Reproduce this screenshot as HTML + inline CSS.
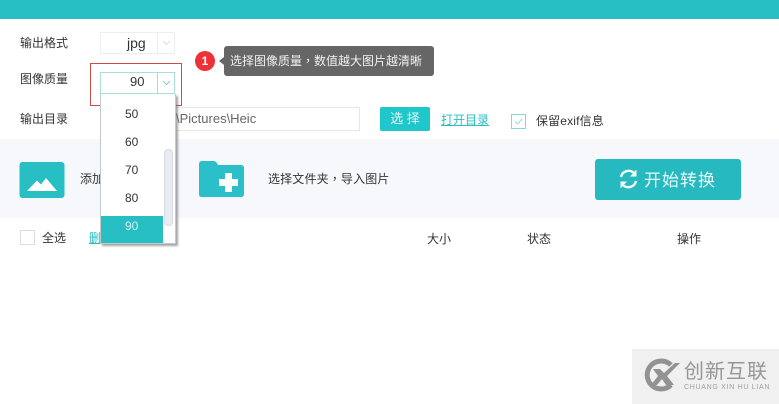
<!DOCTYPE html>
<html><head><meta charset="utf-8">
<style>
html,body{margin:0;padding:0;background:#fff}
#r{position:relative;width:779px;height:404px;overflow:hidden;background:#fff;font-family:"Liberation Sans","Noto Sans CJK SC",sans-serif;font-size:12px;color:#333}
#r div,#r svg{position:absolute}
.t{white-space:nowrap;line-height:16px}
.c{font-family:"Noto Sans CJK TC",sans-serif}
</style></head><body>
<div id="r">
<div style="left:0;top:0;width:779px;height:19px;background:#27bec4"></div>
<div style="left:0;top:139px;width:779px;height:79px;background:#f6f8fb"></div>

<div class="t" style="left:20px;top:35px">输出格式</div>
<div class="t" style="left:20px;top:71px">图像质量</div>
<div class="t" style="left:20px;top:111px">输出目录</div>

<div style="left:100px;top:32px;width:73px;height:20px;border:1px solid #eee"></div>
<div style="left:157px;top:33px;width:1px;height:20px;background:#eee"></div>
<div class="t" style="left:127px;top:35px;font-size:14px;color:#333">jpg</div>
<svg style="left:162px;top:40px" width="9" height="6"><path d="M1 1L4.500 4.500L8 1" fill="none" stroke="#ddd"/></svg>

<div style="left:100px;top:72px;width:73px;height:20px;border:1px solid #a6dfe2"></div>
<div style="left:157px;top:73px;width:1px;height:20px;background:#a6dfe2"></div>
<div class="t" style="left:130px;top:74px;font-size:13px;color:#333">90</div>
<svg style="left:162px;top:80px" width="9" height="6"><path d="M1 1L4.500 4.500L8 1" fill="none" stroke="#7fd2d6"/></svg>
<div style="left:90px;top:63px;width:90px;height:41px;border:1px solid #cf4b45"></div>

<div style="left:174px;top:107px;width:184px;height:22px;border:1px solid #e6e6e6"></div>
<div class="t" style="left:176px;top:111px;font-size:13px;color:#666">\Pictures\Heic</div>

<div style="left:380px;top:107px;width:50px;height:24px;background:#1fc6ca;border-radius:2px;color:#e8fbfb;text-align:center;line-height:24px;font-size:13px">选 择</div>
<div class="t" style="left:441px;top:112px;color:#27bec4;text-decoration:underline;font-size:12px">打开目录</div>
<div style="left:511px;top:114px;width:13px;height:13px;border:1px solid #7fd8dc"></div>
<svg style="left:511px;top:114px" width="15" height="15"><path d="M4 7.500L6.500 10L11 5" fill="none" stroke="#8fdcdf"/></svg>
<div class="t" style="left:536px;top:113px;letter-spacing:.15px">保留exif信息</div>

<div style="left:195px;top:51px;width:20px;height:20px;border-radius:50%;background:#ee3136;color:#fff;text-align:center;line-height:20px;font-size:12px;font-weight:bold">1</div>
<div style="left:219px;top:57px;width:0;height:0;border-top:4px solid transparent;border-bottom:4px solid transparent;border-right:5px solid #666"></div>
<div class="t" style="left:224px;top:46px;width:210px;height:30px;line-height:29px;background:#666;border-radius:3px;color:#f2f2f2;text-indent:6px">选择图像质量<span class="c">，</span>数值越大图片越清晰</div>

<svg style="left:19px;top:162px" width="46" height="37"><rect width="45" height="36" y="0" x="0.500" rx="3" fill="#27bec4"/><path d="M8 29L18 18.500L22 22.500L27 16L38 29Z" fill="#fff"/></svg>
<div class="t" style="left:80px;top:171px">添加图片</div>

<svg style="left:199px;top:161px" width="46" height="37"><path d="M3 0H15Q17 0 19 4H42Q45 4 45 7V33Q45 36 42 36H3Q0 36 0 33V3Q0 0 3 0Z" fill="#2bbfc9"/><rect x="26" y="12" width="7" height="19" fill="#fff"/><rect x="20" y="18" width="19" height="7" fill="#fff"/></svg>
<div class="t" style="left:268px;top:171px;letter-spacing:.15px">选择文件夹<span class="c">，</span>导入图片</div>

<div style="left:595px;top:159px;width:146px;height:41px;background:#27b9c0;border-radius:3px"></div>
<svg style="left:618px;top:168px" width="21" height="22" viewBox="0 0 21 22"><path d="M3 9A7.800 7.800 0 0 1 16.500 5.500M18 13A7.800 7.800 0 0 1 4.500 16.500" fill="none" stroke="#f3fbfb" stroke-width="2.400"/><path d="M18.500 1.500V8.500H12Z M2.500 20.500V13.500H9Z" fill="#f3fbfb"/></svg>
<div class="t" style="left:644px;top:170px;font-size:17px;line-height:21px;color:#eafafa;letter-spacing:1px">开始转换</div>

<div style="left:20px;top:230px;width:13px;height:13px;border:1px solid #ddd;background:#fff"></div>
<div class="t" style="left:42px;top:230px">全选</div>
<div class="t" style="left:89px;top:230px;color:#27bec4;text-decoration:underline">删除</div>
<div class="t" style="left:427px;top:231px">大小</div>
<div class="t" style="left:527px;top:231px">状态</div>
<div class="t" style="left:677px;top:231px">操作</div>

<div style="left:100px;top:94px;width:74px;height:149px;background:#fff;border:1px solid #c4c8cc;border-top:0;box-shadow:2px 2px 2px rgba(90,90,90,.55)"></div>
<div class="t" style="left:125px;top:106px;color:#333">50</div>
<div class="t" style="left:125px;top:134px;color:#333">60</div>
<div class="t" style="left:125px;top:162px;color:#333">70</div>
<div class="t" style="left:125px;top:190px;color:#333">80</div>
<div style="left:101px;top:216px;width:62px;height:27px;background:#27bec4"></div>
<div class="t" style="left:125px;top:218px;color:#d5f2f3">90</div>
<div style="left:164px;top:149px;width:9px;height:77px;background:#e8ecf2;border:1px solid #d6dbe2;box-sizing:border-box;border-radius:4px"></div>

<div style="left:632px;top:349px;width:147px;height:55px;background:#f0f0f0"></div>
<svg style="left:644px;top:358px" width="36" height="34" viewBox="0 0 36 34"><path d="M27 7A14 14 0 1 0 27 27" fill="none" stroke="#929292" stroke-width="5"/><path d="M9 11H16L20 15L31 5H36L23 18L30 27H22L18 21L13 27H7L14 18Z" fill="#929292"/></svg>
<div class="t" style="left:684px;top:362px;font-size:20px;line-height:21px;color:#969696;letter-spacing:1px">创新互联</div>
<div class="t" style="left:684px;top:383px;font-size:7px;line-height:9px;color:#a0a0a0;letter-spacing:.7px">CHUANG XIN HU LIAN</div>
</div>
</body></html>
